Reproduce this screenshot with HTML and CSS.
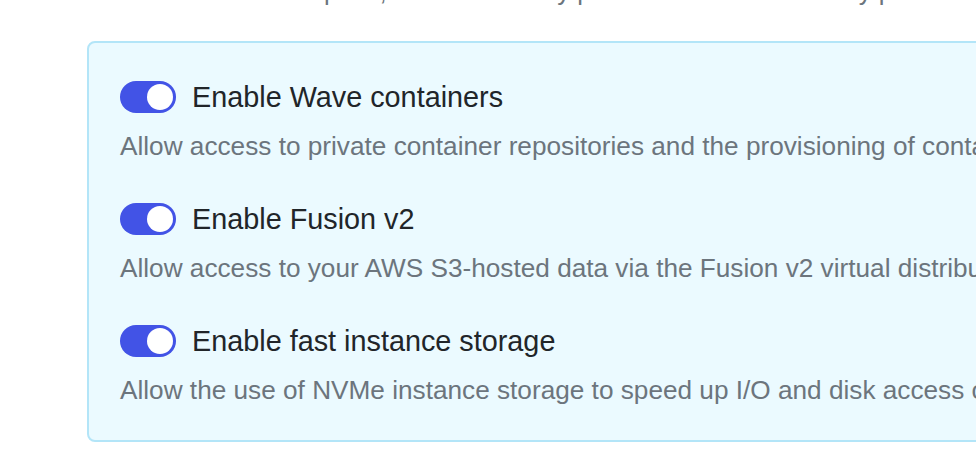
FILE: index.html
```html
<!DOCTYPE html>
<html lang="en">
<head>
<meta charset="utf-8">
<title>Compute environment features</title>
<link rel="stylesheet" href="styles.css">
</head>
<body>
<div class="page">
  <p class="intro">Turn on the workspace, which then only provided when allowed by profile settings.</p>
  <div class="card">
    <div class="feature">
      <div class="feature-head">
        <span class="toggle"><span class="knob"></span></span>
        <span class="title">Enable Wave containers</span>
      </div>
      <p class="desc">Allow access to private container repositories and the provisioning of containers in your Nextflow pipelines via the Wave containers service.</p>
    </div>
    <div class="feature">
      <div class="feature-head">
        <span class="toggle"><span class="knob"></span></span>
        <span class="title">Enable Fusion v2</span>
      </div>
      <p class="desc">Allow access to your AWS S3-hosted data via the Fusion v2 virtual distributed file system.</p>
    </div>
    <div class="feature">
      <div class="feature-head">
        <span class="toggle"><span class="knob"></span></span>
        <span class="title">Enable fast instance storage</span>
      </div>
      <p class="desc">Allow the use of NVMe instance storage to speed up I/O and disk access operations.</p>
    </div>
  </div>
</div>
</body>
</html>
```
FILE: styles.css
```css
html, body {
  margin: 0;
  padding: 0;
  background: #ffffff;
  overflow: hidden;
}
body {
  font-family: "Liberation Sans", Arial, sans-serif;
}
.page {
  width: 1400px;
  padding-left: 87px;
}
.intro {
  margin: -28px 0 0 33px;
  font-size: 25.6px;
  line-height: 38px;
  color: #6c757d;
  white-space: nowrap;
}
.card {
  margin-top: 31px;
  width: 1200px;
  box-sizing: border-box;
  border: 2px solid #b3e5f8;
  border-radius: 8px;
  background: #ebfaff;
  padding: 38px 0 31px 31px;
}
.feature + .feature {
  margin-top: 38px;
}
.feature-head {
  display: flex;
  align-items: center;
  height: 32px;
}
.toggle {
  display: flex;
  align-items: center;
  justify-content: flex-end;
  box-sizing: border-box;
  width: 56px;
  height: 32px;
  padding-right: 3px;
  border-radius: 16px;
  background: #4253e6;
}
.knob {
  width: 26px;
  height: 26px;
  border-radius: 50%;
  background: #ffffff;
}
.title {
  margin-left: 16px;
  font-size: 28.8px;
  color: #212529;
  white-space: nowrap;
}
.desc {
  margin: 14px 0 0 0;
  font-size: 26.2px;
  line-height: 38px;
  color: #6c757d;
  white-space: nowrap;
}
```
